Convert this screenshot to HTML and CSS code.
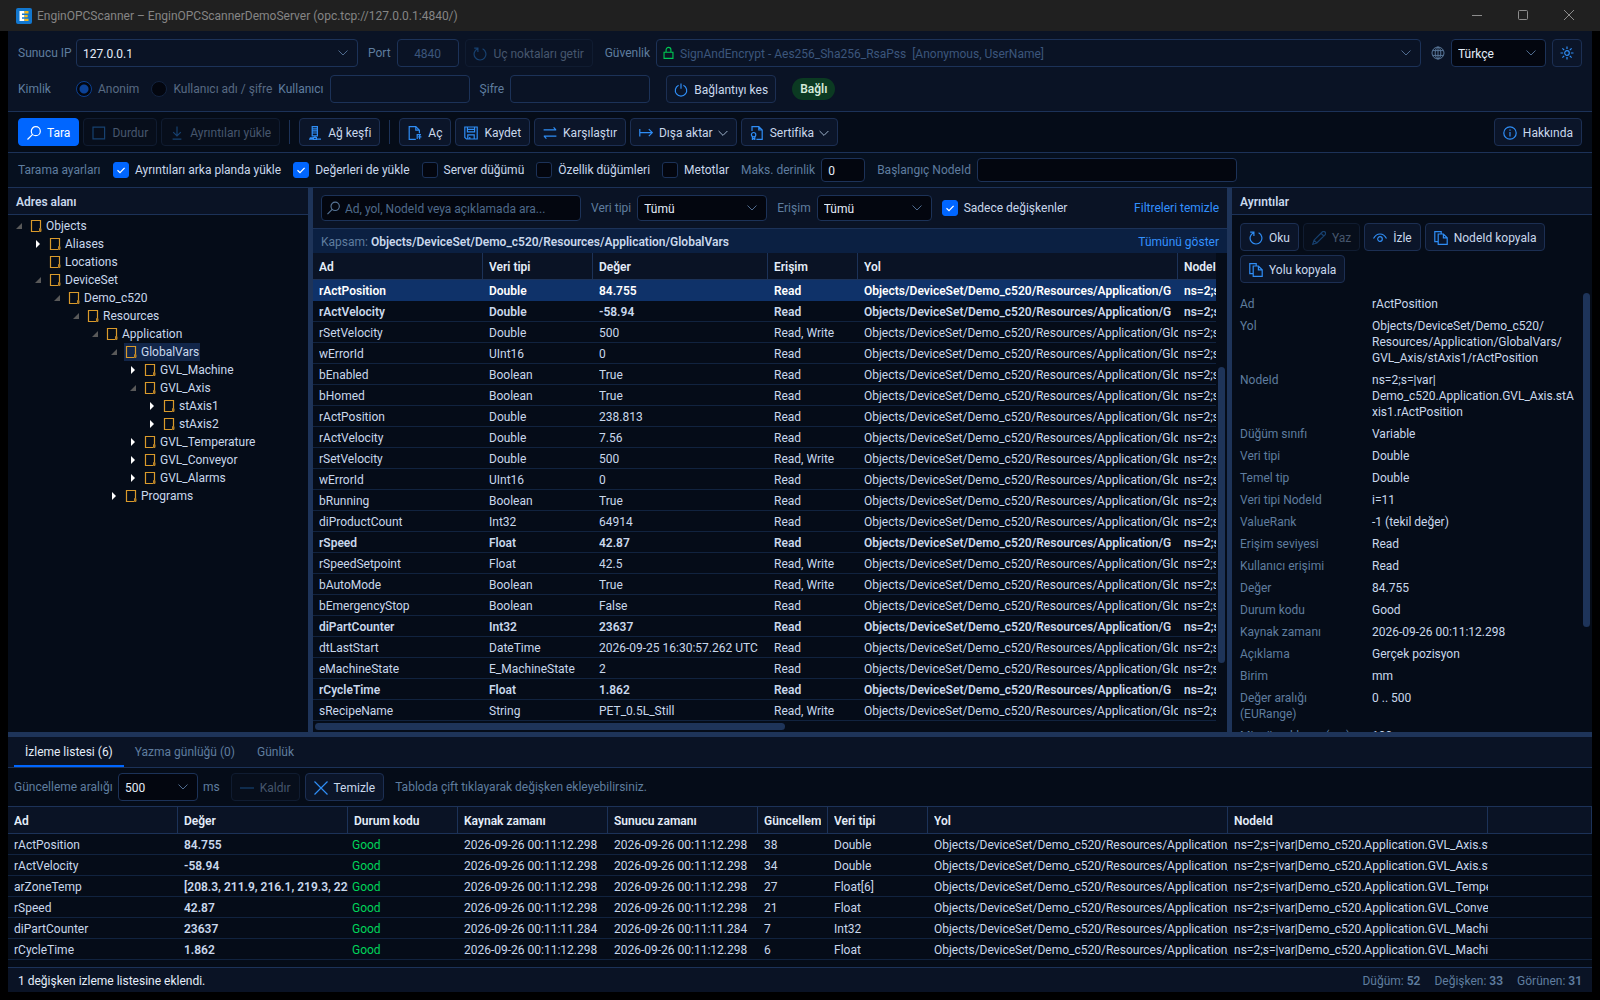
FILE: index.html
```html
<!DOCTYPE html>
<html lang="tr">
<head>
<meta charset="utf-8">
<meta name="viewport" content="width=device-width, initial-scale=1">
<title>EnginOPCScanner – EnginOPCScannerDemoServer</title>
<link rel="stylesheet" href="styles.css">
</head>
<body>
<svg class="sprite" aria-hidden="true">
  <symbol id="i-refresh" viewBox="0 0 14 14"><path d="M4.6 1.7A5.9 5.9 0 1 0 9.6 1.8M1.2 1.1h3.7v3.8"/></symbol>
  <symbol id="i-lock" viewBox="0 0 14 14"><path d="M2.2 6.2h9.6v6.6H2.2zM4.4 6V3.6a2.6 2.6 0 0 1 5.2 0V6"/></symbol>
  <symbol id="i-globe" viewBox="0 0 14 14"><circle cx="7" cy="7" r="6"/><ellipse cx="7" cy="7" rx="2.8" ry="6"/><path d="M1.6 4.6h10.8M1.6 9.4h10.8M7 1v12"/></symbol>
  <symbol id="i-sun" viewBox="0 0 14 14"><circle cx="7" cy="7" r="2.3"/><path d="M7 .5v2.6M7 10.9v2.6M.5 7h2.6M10.9 7h2.6M2.4 2.4l1.8 1.8M9.8 9.8l1.8 1.8M11.6 2.4L9.8 4.2M4.2 9.8l-1.8 1.8"/></symbol>
  <symbol id="i-power" viewBox="0 0 14 14"><path d="M4.6 2.2a5.7 5.7 0 1 0 4.8 0M7 .4v5.4"/></symbol>
  <symbol id="i-search" viewBox="0 0 14 14"><circle cx="8.8" cy="5.2" r="4.5"/><path d="M5.6 8.4L.5 13.5"/></symbol>
  <symbol id="i-stop" viewBox="0 0 14 14"><path d="M1 1.2h11.6v11.6H1z"/></symbol>
  <symbol id="i-down" viewBox="0 0 14 14"><path d="M7 .5v9M3.2 6.2L7 10l3.8-3.8M2.6 13.2h8.8"/></symbol>
  <symbol id="i-net" viewBox="0 0 14 14"><path d="M4.2.6h5.2v9.2H4.2zM4.2 2.8h5.2M4.2 4.9h5.2M4.2 7h5.2M1 13.2h4.4M8.4 13.2h4.6M5.4 11.6h3v1.9h-3zM7 9.8v1.8M1.8 11.8h3"/></symbol>
  <symbol id="i-open" viewBox="0 0 14 14"><path d="M7.8 13.4H1.2V.6h6.6l3.6 3.6v3M7.8.6v3.6h3.6M9.2 12.9V8.6h3.8M13.4 10.8h-3.2M11.6 8.8v4.4"/></symbol>
  <symbol id="i-save" viewBox="0 0 14 14"><path d="M.8 1h12.4v12H2.4L.8 11.4zM3.4 1v4.8h7.2V1M3.8 13V8.8h6.4V13M5.8 11v2M3.8 3.4h6.2"/></symbol>
  <symbol id="i-compare" viewBox="0 0 14 14"><path d="M.6 3.8h12.6M10.6 1.4L13 3.8M13.4 10.2H.8M3.4 12.6L1 10.2"/></symbol>
  <symbol id="i-export" viewBox="0 0 14 14"><path d="M.8 3v7.4M1 6.7h12M9.8 3.2l3.5 3.5-3.5 3.5"/></symbol>
  <symbol id="i-cert" viewBox="0 0 14 14"><path d="M2 5V.6h6.8l3.4 3.4v9.4H6.4M8.8.6V4h3.4M2.4 10.6v2.9l1.2-.9 1.2.9v-2.9"/><circle cx="3.6" cy="8.7" r="2.2"/></symbol>
  <symbol id="i-chev" viewBox="0 0 10 10"><path d="M.6 3L5 7.4 9.4 3"/></symbol>
  <symbol id="i-info" viewBox="0 0 14 14"><circle cx="7" cy="7" r="6.2"/><path d="M7 6v4.4M7 3.6v1.2"/></symbol>
  <symbol id="i-edit" viewBox="0 0 14 14"><path d="M.8 13.2l1.2-4L10.2 1a1.9 1.9 0 0 1 2.8 2.8L4.8 12zM9 2.2L11.8 5M2 9.2L4.8 12"/></symbol>
  <symbol id="i-eye" viewBox="0 0 14 14"><path d="M.5 7.6C2 4.6 4.4 3 7 3s5 1.600 6.500 4.600"/><circle cx="7" cy="8" r="2.300"/></symbol>
  <symbol id="i-copy" viewBox="0 0 14 14"><path d="M4 10.600H.8V.6h6.400v2M4.200 3h5.200l3.800 3.800v6.600h-9zM9.400 3v3.800h3.800"/></symbol>
  <symbol id="i-minus" viewBox="0 0 14 14"><path d="M0 7h14"/></symbol>
  <symbol id="i-x" viewBox="0 0 14 14"><path d="M.5.5l13 13M13.500.5l-13 13"/></symbol>
  <symbol id="i-folder" viewBox="0 0 12 14"><path d="M10.500 9V1.500h-9v11h7.500" fill="none" stroke="#d99a2b" stroke-width="1.200"/><path d="M9.500 9.500h1.500v3H9.500z" fill="#a87420" stroke="#b98328"/></symbol>
  <symbol id="i-closed" viewBox="0 0 6 8"><path d="M1 0l4 4-4 4z" fill="#fff"/></symbol>
  <symbol id="i-opened" viewBox="0 0 6 8"><path d="M6 1v6H0z" fill="#595959"/></symbol>
</svg>

<header class="titlebar">
  <svg class="logo" viewBox="0 0 16 16" aria-hidden="true"><rect width="16" height="16" rx="2" fill="#1277cf"/><path d="M3.500 3h5v2.400H6v1.500h2.500v2.300H6v1.500h2.500V13h-5z" fill="#fff"/><path d="M8.500 3h4v2.400h-4zM8.500 6.900h3.200v2.300H8.500zM8.500 10.700h4V13h-4z" fill="#f5b81d"/></svg>
  <h1 class="title">EnginOPCScanner – EnginOPCScannerDemoServer (opc.tcp://127.0.0.1:4840/)</h1>
  <div class="winbtns">
    <button class="winbtn" aria-label="Simge durumuna küçült"><svg viewBox="0 0 10 10"><path d="M0 5.500h10"/></svg></button>
    <button class="winbtn" aria-label="Ekranı kapla"><svg viewBox="0 0 10 10"><rect x=".5" y=".5" width="9" height="9" rx="1"/></svg></button>
    <button class="winbtn" aria-label="Kapat"><svg viewBox="0 0 10 10"><path d="M0 0l10 10M10 0L0 10"/></svg></button>
  </div>
</header>

<div class="app">
  <section class="conn">
    <div class="row">
      <label class="lead" for="ip">Sunucu IP</label>
      <select id="ip" class="ctl w-ip flat"><option>127.0.0.1</option></select>
      <label class="lbl sp-m" for="port">Port</label>
      <input id="port" class="ctl w-port flat dim" value="4840" disabled>
      <button class="btn w-endpoints" disabled><svg class="ic"><use href="#i-refresh"/></svg>Uç noktaları getir</button>
      <label class="lbl sp-l" for="sec">Güvenlik</label>
      <div class="stack grow">
        <select id="sec" class="ctl flat dim iconed" disabled><option>SignAndEncrypt - Aes256_Sha256_RsaPss&nbsp; [Anonymous, UserName]</option></select>
        <svg class="ic lock"><use href="#i-lock"/></svg>
      </div>
      <label class="lbl sp-m" for="lang"><svg class="ic globe"><use href="#i-globe"/></svg></label>
      <select id="lang" class="ctl w-lang" aria-label="Dil"><option>Türkçe</option></select>
      <button class="btn square" aria-label="Tema"><svg class="ic"><use href="#i-sun"/></svg></button>
    </div>
    <div class="row">
      <span class="lead">Kimlik</span>
      <label class="radio"><input type="radio" name="auth" checked disabled>Anonim</label>
      <label class="radio"><input type="radio" name="auth" disabled>Kullanıcı adı / şifre</label>
      <label class="lbl" for="user">Kullanıcı</label>
      <input id="user" class="ctl w-cred flat" disabled>
      <label class="lbl sp-m" for="pass">Şifre</label>
      <input id="pass" class="ctl w-cred flat" type="password" disabled>
      <button class="btn sp-xl w-disc"><svg class="ic"><use href="#i-power"/></svg>Bağlantıyı kes</button>
      <span class="badge sp-xl">Bağlı</span>
    </div>
  </section>

  <nav class="toolbar">
    <button class="btn primary"><svg class="ic"><use href="#i-search"/></svg>Tara</button>
    <button class="btn" disabled><svg class="ic"><use href="#i-stop"/></svg>Durdur</button>
    <button class="btn" disabled><svg class="ic"><use href="#i-down"/></svg>Ayrıntıları yükle</button>
    <span class="sep"></span>
    <button class="btn"><svg class="ic"><use href="#i-net"/></svg>Ağ keşfi</button>
    <span class="sep"></span>
    <button class="btn"><svg class="ic"><use href="#i-open"/></svg>Aç</button>
    <button class="btn"><svg class="ic"><use href="#i-save"/></svg>Kaydet</button>
    <button class="btn"><svg class="ic"><use href="#i-compare"/></svg>Karşılaştır</button>
    <button class="btn"><svg class="ic"><use href="#i-export"/></svg>Dışa aktar<svg class="chev"><use href="#i-chev"/></svg></button>
    <button class="btn"><svg class="ic"><use href="#i-cert"/></svg>Sertifika<svg class="chev"><use href="#i-chev"/></svg></button>
    <button class="btn push"><svg class="ic"><use href="#i-info"/></svg>Hakkında</button>
  </nav>

  <section class="options">
    <span class="lbl w-opt">Tarama ayarları</span>
    <label class="check"><input type="checkbox" checked>Ayrıntıları arka planda yükle</label>
    <label class="check"><input type="checkbox" checked>Değerleri de yükle</label>
    <label class="check"><input type="checkbox">Server düğümü</label>
    <label class="check"><input type="checkbox">Özellik düğümleri</label>
    <label class="check"><input type="checkbox">Metotlar</label>
    <div class="field"><label class="lbl" for="depth">Maks. derinlik</label><input id="depth" class="ctl low w-depth" value="0"></div>
    <div class="field"><label class="lbl" for="start">Başlangıç NodeId</label><input id="start" class="ctl low w-filter"></div>
  </section>

  <main class="main">
    <aside class="panel">
      <h2 class="panel-title">Adres alanı</h2>
      <ul class="tree" role="tree">
        <li><div class="node"><svg class="tw"><use href="#i-opened"/></svg><span class="item"><svg class="fold"><use href="#i-folder"/></svg>Objects</span></div>
          <ul>
            <li><div class="node"><svg class="tw"><use href="#i-closed"/></svg><span class="item"><svg class="fold"><use href="#i-folder"/></svg>Aliases</span></div></li>
            <li><div class="node"><svg class="tw"></svg><span class="item"><svg class="fold"><use href="#i-folder"/></svg>Locations</span></div></li>
            <li><div class="node"><svg class="tw"><use href="#i-opened"/></svg><span class="item"><svg class="fold"><use href="#i-folder"/></svg>DeviceSet</span></div>
              <ul>
                <li><div class="node"><svg class="tw"><use href="#i-opened"/></svg><span class="item"><svg class="fold"><use href="#i-folder"/></svg>Demo_c520</span></div>
                  <ul>
                    <li><div class="node"><svg class="tw"><use href="#i-opened"/></svg><span class="item"><svg class="fold"><use href="#i-folder"/></svg>Resources</span></div>
                      <ul>
                        <li><div class="node"><svg class="tw"><use href="#i-opened"/></svg><span class="item"><svg class="fold"><use href="#i-folder"/></svg>Application</span></div>
                          <ul>
                            <li><div class="node"><svg class="tw"><use href="#i-opened"/></svg><span class="item selected"><svg class="fold"><use href="#i-folder"/></svg>GlobalVars</span></div>
                              <ul>
                                <li><div class="node"><svg class="tw"><use href="#i-closed"/></svg><span class="item"><svg class="fold"><use href="#i-folder"/></svg>GVL_Machine</span></div></li>
                                <li><div class="node"><svg class="tw"><use href="#i-opened"/></svg><span class="item"><svg class="fold"><use href="#i-folder"/></svg>GVL_Axis</span></div>
                                  <ul>
                                    <li><div class="node"><svg class="tw"><use href="#i-closed"/></svg><span class="item"><svg class="fold"><use href="#i-folder"/></svg>stAxis1</span></div></li>
                                    <li><div class="node"><svg class="tw"><use href="#i-closed"/></svg><span class="item"><svg class="fold"><use href="#i-folder"/></svg>stAxis2</span></div></li>
                                  </ul>
                                </li>
                                <li><div class="node"><svg class="tw"><use href="#i-closed"/></svg><span class="item"><svg class="fold"><use href="#i-folder"/></svg>GVL_Temperature</span></div></li>
                                <li><div class="node"><svg class="tw"><use href="#i-closed"/></svg><span class="item"><svg class="fold"><use href="#i-folder"/></svg>GVL_Conveyor</span></div></li>
                                <li><div class="node"><svg class="tw"><use href="#i-closed"/></svg><span class="item"><svg class="fold"><use href="#i-folder"/></svg>GVL_Alarms</span></div></li>
                              </ul>
                            </li>
                            <li><div class="node"><svg class="tw"><use href="#i-closed"/></svg><span class="item"><svg class="fold"><use href="#i-folder"/></svg>Programs</span></div></li>
                          </ul>
                        </li>
                      </ul>
                    </li>
                  </ul>
                </li>
              </ul>
            </li>
          </ul>
        </li>
      </ul>
    </aside>
    <div class="split"></div>

    <section class="panel">
      <div class="filters">
        <div class="stack">
          <input class="ctl mid iconed w-filter" placeholder="Ad, yol, NodeId veya açıklamada ara..." aria-label="Ara">
          <svg class="ic find"><use href="#i-search"/></svg>
        </div>
        <div class="field"><label class="lbl" for="ftype">Veri tipi</label><select id="ftype" class="ctl mid w-type"><option>Tümü</option></select></div>
        <div class="field"><label class="lbl" for="facc">Erişim</label><select id="facc" class="ctl mid w-acc"><option>Tümü</option></select></div>
        <label class="check"><input type="checkbox" checked>Sadece değişkenler</label>
        <a class="link push" href="#">Filtreleri temizle</a>
      </div>
      <div class="scope"><span><span class="lbl">Kapsam:</span> <b>Objects/DeviceSet/Demo_c520/Resources/Application/GlobalVars</b></span><a class="link push" href="#">Tümünü göster</a></div>
      <div class="scroller">
        <div class="viewport">
          <table class="grid vars">
            <colgroup><col class="c-170"><col class="c-110"><col class="c-175"><col class="c-90"><col class="c-320"><col class="c-260"></colgroup>
            <thead><tr><th>Ad</th><th>Veri tipi</th><th>Değer</th><th>Erişim</th><th>Yol</th><th>NodeId</th></tr></thead>
            <tbody>
              <tr class="live current"><td>rActPosition</td><td>Double</td><td>84.755</td><td>Read</td><td>Objects/DeviceSet/Demo_c520/Resources/Application/G</td><td>ns=2;s=|var|</td></tr>
              <tr class="live"><td>rActVelocity</td><td>Double</td><td>-58.94</td><td>Read</td><td>Objects/DeviceSet/Demo_c520/Resources/Application/G</td><td>ns=2;s=|var|</td></tr>
              <tr><td>rSetVelocity</td><td>Double</td><td>500</td><td>Read, Write</td><td>Objects/DeviceSet/Demo_c520/Resources/Application/Glo</td><td>ns=2;s=|var|</td></tr>
              <tr><td>wErrorId</td><td>UInt16</td><td>0</td><td>Read</td><td>Objects/DeviceSet/Demo_c520/Resources/Application/Glo</td><td>ns=2;s=|var|</td></tr>
              <tr><td>bEnabled</td><td>Boolean</td><td>True</td><td>Read</td><td>Objects/DeviceSet/Demo_c520/Resources/Application/Glo</td><td>ns=2;s=|var|</td></tr>
              <tr><td>bHomed</td><td>Boolean</td><td>True</td><td>Read</td><td>Objects/DeviceSet/Demo_c520/Resources/Application/Glo</td><td>ns=2;s=|var|</td></tr>
              <tr><td>rActPosition</td><td>Double</td><td>238.813</td><td>Read</td><td>Objects/DeviceSet/Demo_c520/Resources/Application/Glo</td><td>ns=2;s=|var|</td></tr>
              <tr><td>rActVelocity</td><td>Double</td><td>7.56</td><td>Read</td><td>Objects/DeviceSet/Demo_c520/Resources/Application/Glo</td><td>ns=2;s=|var|</td></tr>
              <tr><td>rSetVelocity</td><td>Double</td><td>500</td><td>Read, Write</td><td>Objects/DeviceSet/Demo_c520/Resources/Application/Glo</td><td>ns=2;s=|var|</td></tr>
              <tr><td>wErrorId</td><td>UInt16</td><td>0</td><td>Read</td><td>Objects/DeviceSet/Demo_c520/Resources/Application/Glo</td><td>ns=2;s=|var|</td></tr>
              <tr><td>bRunning</td><td>Boolean</td><td>True</td><td>Read</td><td>Objects/DeviceSet/Demo_c520/Resources/Application/Glo</td><td>ns=2;s=|var|</td></tr>
              <tr><td>diProductCount</td><td>Int32</td><td>64914</td><td>Read</td><td>Objects/DeviceSet/Demo_c520/Resources/Application/Glo</td><td>ns=2;s=|var|</td></tr>
              <tr class="live"><td>rSpeed</td><td>Float</td><td>42.87</td><td>Read</td><td>Objects/DeviceSet/Demo_c520/Resources/Application/G</td><td>ns=2;s=|var|</td></tr>
              <tr><td>rSpeedSetpoint</td><td>Float</td><td>42.5</td><td>Read, Write</td><td>Objects/DeviceSet/Demo_c520/Resources/Application/Glo</td><td>ns=2;s=|var|</td></tr>
              <tr><td>bAutoMode</td><td>Boolean</td><td>True</td><td>Read, Write</td><td>Objects/DeviceSet/Demo_c520/Resources/Application/Glo</td><td>ns=2;s=|var|</td></tr>
              <tr><td>bEmergencyStop</td><td>Boolean</td><td>False</td><td>Read</td><td>Objects/DeviceSet/Demo_c520/Resources/Application/Glo</td><td>ns=2;s=|var|</td></tr>
              <tr class="live"><td>diPartCounter</td><td>Int32</td><td>23637</td><td>Read</td><td>Objects/DeviceSet/Demo_c520/Resources/Application/G</td><td>ns=2;s=|var|</td></tr>
              <tr><td>dtLastStart</td><td>DateTime</td><td>2026-09-25 16:30:57.262 UTC</td><td>Read</td><td>Objects/DeviceSet/Demo_c520/Resources/Application/Glo</td><td>ns=2;s=|var|</td></tr>
              <tr><td>eMachineState</td><td>E_MachineState</td><td>2</td><td>Read</td><td>Objects/DeviceSet/Demo_c520/Resources/Application/Glo</td><td>ns=2;s=|var|</td></tr>
              <tr class="live"><td>rCycleTime</td><td>Float</td><td>1.862</td><td>Read</td><td>Objects/DeviceSet/Demo_c520/Resources/Application/G</td><td>ns=2;s=|var|</td></tr>
              <tr><td>sRecipeName</td><td>String</td><td>PET_0.5L_Still</td><td>Read, Write</td><td>Objects/DeviceSet/Demo_c520/Resources/Application/Glo</td><td>ns=2;s=|var|</td></tr>
            </tbody>
          </table>
        </div>
        <div class="vbar"><i class="thumb vars-v"></i></div>
        <div class="hbar"><i class="thumb vars-h"></i></div>
      </div>
    </section>
    <div class="split"></div>

    <aside class="panel">
      <h2 class="panel-title">Ayrıntılar</h2>
      <div class="actions">
        <button class="btn"><svg class="ic"><use href="#i-refresh"/></svg>Oku</button>
        <button class="btn" disabled><svg class="ic"><use href="#i-edit"/></svg>Yaz</button>
        <button class="btn"><svg class="ic"><use href="#i-eye"/></svg>İzle</button>
        <button class="btn"><svg class="ic"><use href="#i-copy"/></svg>NodeId kopyala</button>
        <button class="btn"><svg class="ic"><use href="#i-copy"/></svg>Yolu kopyala</button>
      </div>
      <div class="details">
        <dl class="props">
          <dt>Ad</dt><dd>rActPosition</dd>
          <dt>Yol</dt><dd>Objects/DeviceSet/Demo_c520/<wbr>Resources/Application/GlobalVars/<wbr>GVL_Axis/stAxis1/rActPosition</dd>
          <dt>NodeId</dt><dd>ns=2;s=|var|<wbr>Demo_c520.Application.GVL_Axis.stA<wbr>xis1.rActPosition</dd>
          <dt>Düğüm sınıfı</dt><dd>Variable</dd>
          <dt>Veri tipi</dt><dd>Double</dd>
          <dt>Temel tip</dt><dd>Double</dd>
          <dt>Veri tipi NodeId</dt><dd>i=11</dd>
          <dt>ValueRank</dt><dd>-1 (tekil değer)</dd>
          <dt>Erişim seviyesi</dt><dd>Read</dd>
          <dt>Kullanıcı erişimi</dt><dd>Read</dd>
          <dt>Değer</dt><dd>84.755</dd>
          <dt>Durum kodu</dt><dd>Good</dd>
          <dt>Kaynak zamanı</dt><dd>2026-09-26 00:11:12.298</dd>
          <dt>Açıklama</dt><dd>Gerçek pozisyon</dd>
          <dt>Birim</dt><dd>mm</dd>
          <dt>Değer aralığı (EURange)</dt><dd>0 .. 500</dd>
          <dt>Min. örnekleme (ms)</dt><dd>100</dd>
        </dl>
        <div class="vbar"><i class="thumb details-v"></i></div>
      </div>
    </aside>
  </main>

  <section class="bottom">
    <div class="tabs" role="tablist">
      <button class="tab active" role="tab" aria-selected="true">İzleme listesi (6)</button>
      <button class="tab" role="tab">Yazma günlüğü (0)</button>
      <button class="tab" role="tab">Günlük</button>
    </div>
    <div class="watchbar">
      <label class="lbl w-upd" for="interval">Güncelleme aralığı</label>
      <select id="interval" class="ctl w-int"><option>500</option></select>
      <span class="lbl">ms</span>
      <button class="btn sp-l" disabled><svg class="ic"><use href="#i-minus"/></svg>Kaldır</button>
      <button class="btn"><svg class="ic"><use href="#i-x"/></svg>Temizle</button>
      <span class="lbl sp-l">Tabloda çift tıklayarak değişken ekleyebilirsiniz.</span>
    </div>
    <table class="grid watch">
      <colgroup><col class="c-170"><col class="c-170"><col class="c-110"><col class="c-150"><col class="c-150"><col class="c-70"><col class="c-100"><col class="c-300"><col class="c-260"><col></colgroup>
      <thead><tr><th>Ad</th><th>Değer</th><th>Durum kodu</th><th>Kaynak zamanı</th><th>Sunucu zamanı</th><th>Güncellem</th><th>Veri tipi</th><th>Yol</th><th>NodeId</th><th></th></tr></thead>
      <tbody>
        <tr><td>rActPosition</td><td class="val">84.755</td><td class="good">Good</td><td>2026-09-26 00:11:12.298</td><td>2026-09-26 00:11:12.298</td><td>38</td><td>Double</td><td>Objects/DeviceSet/Demo_c520/Resources/Application/</td><td>ns=2;s=|var|Demo_c520.Application.GVL_Axis.st</td><td></td></tr>
        <tr><td>rActVelocity</td><td class="val">-58.94</td><td class="good">Good</td><td>2026-09-26 00:11:12.298</td><td>2026-09-26 00:11:12.298</td><td>34</td><td>Double</td><td>Objects/DeviceSet/Demo_c520/Resources/Application/</td><td>ns=2;s=|var|Demo_c520.Application.GVL_Axis.st</td><td></td></tr>
        <tr><td>arZoneTemp</td><td class="val">[208.3, 211.9, 216.1, 219.3, 220</td><td class="good">Good</td><td>2026-09-26 00:11:12.298</td><td>2026-09-26 00:11:12.298</td><td>27</td><td>Float[6]</td><td>Objects/DeviceSet/Demo_c520/Resources/Application/</td><td>ns=2;s=|var|Demo_c520.Application.GVL_Tempe</td><td></td></tr>
        <tr><td>rSpeed</td><td class="val">42.87</td><td class="good">Good</td><td>2026-09-26 00:11:12.298</td><td>2026-09-26 00:11:12.298</td><td>21</td><td>Float</td><td>Objects/DeviceSet/Demo_c520/Resources/Application/</td><td>ns=2;s=|var|Demo_c520.Application.GVL_Conve</td><td></td></tr>
        <tr><td>diPartCounter</td><td class="val">23637</td><td class="good">Good</td><td>2026-09-26 00:11:11.284</td><td>2026-09-26 00:11:11.284</td><td>7</td><td>Int32</td><td>Objects/DeviceSet/Demo_c520/Resources/Application/</td><td>ns=2;s=|var|Demo_c520.Application.GVL_Machi</td><td></td></tr>
        <tr><td>rCycleTime</td><td class="val">1.862</td><td class="good">Good</td><td>2026-09-26 00:11:12.298</td><td>2026-09-26 00:11:12.298</td><td>6</td><td>Float</td><td>Objects/DeviceSet/Demo_c520/Resources/Application/</td><td>ns=2;s=|var|Demo_c520.Application.GVL_Machi</td><td></td></tr>
      </tbody>
    </table>
  </section>

  <footer class="status">
    <span class="msg">1 değişken izleme listesine eklendi.</span>
    <span class="lbl push">Düğüm: <b>52</b></span>
    <span class="lbl">Değişken: <b>33</b></span>
    <span class="lbl">Görünen: <b>31</b></span>
  </footer>
</div>
</body>
</html>
```
FILE: styles.css
```css
:root {
  --bg: #050c18;
  --bar: #0a1325;
  --options: #06101f;
  --field: #03060f;
  --line: #1c3258;
  --line-soft: #11233f;
  --split: #1e3459;
  --text: #c9d8ec;
  --strong: #e4edf9;
  --muted: #5f7d9f;
  --off: #46566d;
  --accent: #0066ff;
  --icon: #2f8df5;
}

* { box-sizing: border-box; }

body {
  margin: 0;
  height: 100vh;
  display: flex;
  flex-direction: column;
  background: #000;
  color: var(--text);
  font: 12px/16px Roboto, "Open Sans", sans-serif;
  overflow: hidden;
}

.sprite { display: none; }
button, input, select { font: inherit; color: inherit; }
svg { flex: none; }
b { font-weight: 600; }

/* Title bar */
.titlebar {
  display: flex;
  align-items: center;
  height: 31px;
  padding-left: 16px;
  background: #202020;
  color: #858585;
}
.logo { width: 16px; height: 16px; }
.title { margin: 0 0 0 5px; font-size: 12px; font-weight: 400; }
.winbtns { display: flex; margin-left: auto; margin-right: 8px; }
.winbtn { width: 46px; height: 31px; padding: 0; border: 0; background: none; }
.winbtn svg { width: 10px; height: 10px; fill: none; stroke: #8c8c8c; }

.app {
  flex: 1;
  min-height: 0;
  display: flex;
  flex-direction: column;
  margin: 0 8px 8px;
  background: var(--bg);
}

/* Shared controls */
.ctl {
  height: 28px;
  min-width: 0;
  padding: 1px 6px 0;
  border: 1px solid var(--line);
  border-radius: 4px;
  background-color: var(--field);
  color: var(--strong);
  outline: 0;
}
.ctl.mid { height: 26px; }
.ctl.low { height: 24px; }
.ctl.flat { background-color: transparent; }
.ctl.dim { color: #3c567c; opacity: 1; }
.ctl::placeholder { color: #4f6a8b; opacity: 1; }
select.ctl {
  appearance: none;
  background-image: url("data:image/svg+xml,%3Csvg xmlns='http://www.w3.org/2000/svg' width='10' height='6'%3E%3Cpath d='M.5.5L5 5 9.5.5' fill='none' stroke='%234f6b8f'/%3E%3C/svg%3E");
  background-repeat: no-repeat;
  background-position: right 9px center;
}
.btn {
  display: inline-flex;
  align-items: center;
  justify-content: center;
  gap: 6px;
  height: 28px;
  padding: 1px 8px 0;
  border: 1px solid #1c2f53;
  border-radius: 4px;
  background: #0b1529;
  color: var(--text);
  white-space: nowrap;
}
.btn:disabled { border-color: #101c31; background: #070e1b; color: var(--off); }
.btn:disabled .ic { stroke: #174170; }
.btn.primary { border-color: var(--accent); background: var(--accent); color: #fff; }
.btn.primary .ic { stroke: #fff; }
.btn.square { width: 30px; padding: 0; }
.ic { width: 14px; height: 14px; fill: none; stroke: var(--icon); stroke-width: 1.2; }
.chev { width: 10px; height: 10px; fill: none; stroke: #9fb3cc; margin-left: -1px; }
.lbl, .lead { color: var(--muted); white-space: nowrap; }
.lead { width: 52px; }
.field { display: flex; align-items: center; gap: 6px; }
.push { margin-left: auto; }
.grow { flex: 1; min-width: 0; }
.sp-m { margin-left: 4px; }
.sp-l { margin-left: 6px; }
.sp-xl { margin-left: 10px; }

/* Icon laid over the left end of a field */
.stack { display: grid; align-items: center; }
.stack > * { grid-area: 1 / 1; }
.stack .ic { pointer-events: none; }
.iconed { padding-left: 23px; }
.lock { stroke: #00c853; margin-left: 6px; width: 13px; }
.find { stroke: #587698; margin-left: 6px; width: 13px; }

.check, .radio { display: flex; align-items: center; gap: 6px; white-space: nowrap; }
.check input, .radio input {
  appearance: none;
  width: 16px;
  height: 16px;
  margin: 0;
  border: 1px solid var(--line);
  border-radius: 3px;
  background: var(--field);
}
.check input:checked {
  border-color: var(--accent);
  background: var(--accent) url("data:image/svg+xml,%3Csvg xmlns='http://www.w3.org/2000/svg' width='14' height='14'%3E%3Cpath d='M3.500 7.200L6 9.600l4.600-4.800' fill='none' stroke='%23fff' stroke-width='1.200'/%3E%3C/svg%3E") center no-repeat;
}
.radio { color: #586a83; }
.radio + .radio { margin-left: 6px; }
.radio input { border-radius: 50%; border-color: #13233f; }
.radio input:checked { border-color: #0b3f8f; background: radial-gradient(circle, #0b4196 4px, var(--field) 5px); }
.link { color: #3391ff; text-decoration: none; }

/* Connection */
.conn { display: grid; gap: 8px; padding: 8px 10px; background: var(--bar); border-bottom: 1px solid var(--line); }
.row { display: flex; align-items: center; gap: 6px; }
.conn .btn:disabled { background: transparent; }
.w-ip { width: 282px; }
.w-port { width: 62px; text-align: center; }
.w-endpoints { width: 128px; }
.w-lang { width: 95px; }
.w-cred { width: 140px; }
.w-disc { width: 110px; }
.globe { stroke: #587698; stroke-width: 1; display: block; }
.badge { padding: 3px 8px; border-radius: 11px; background: #0b3a22; color: #d3ead9; font-weight: 600; }

.toolbar { display: flex; align-items: center; gap: 4px; padding: 6px 10px; border-bottom: 1px solid var(--line); }
.sep { width: 1px; height: 24px; margin: 0 5px; background: var(--line); }

.options { display: flex; align-items: center; gap: 12px; padding: 5px 10px; background: var(--options); border-bottom: 1px solid var(--line); }
.w-opt { width: 83px; }
.w-depth { width: 44px; }
.w-filter { width: 260px; }

/* Main area */
.main { flex: 1; min-height: 0; display: grid; grid-template: minmax(0, 1fr) / 300px 5px minmax(0, 1fr) 5px 360px; }
.split { background: var(--split); }
.panel { display: flex; flex-direction: column; min-width: 0; min-height: 0; overflow: hidden; }
.panel-title {
  margin: 0;
  padding: 6px 8px 4px;
  background: var(--bar);
  border-bottom: 1px solid var(--line);
  font-size: 12px;
  font-weight: 600;
}

.tree, .tree ul { list-style: none; margin: 0; padding: 0; }
.tree { padding: 2px 8px; }
.tree ul { padding-left: 19px; }
.node { display: flex; align-items: center; height: 18px; }
.tw { width: 6px; height: 8px; margin-right: 7px; }
.item { display: flex; align-items: center; gap: 4px; height: 18px; padding: 0 1px; }
.item.selected { background: #12264a; }
.fold { width: 12px; height: 14px; }

.filters { display: flex; align-items: center; gap: 10px; padding: 7px 8px; background: var(--bar); border-bottom: 1px solid var(--line); }
.w-type { width: 130px; }
.w-acc { width: 115px; }
.scope { display: flex; align-items: center; padding: 5px 8px 3px; background: #0b2042; }
.scroller { flex: 1; min-height: 0; display: grid; grid-template: minmax(0, 1fr) 11px / minmax(0, 1fr) 11px; }
.viewport { overflow: hidden; }
.vbar, .hbar { padding: 2px; }
.thumb { display: block; border-radius: 4px; background: var(--split); }
.vbar .thumb { width: 7px; }
.hbar .thumb { height: 7px; }
.vars-v { margin-top: 112px; height: 296px; }
.vars-h { width: 470px; }

/* Data grids: long text is clipped at the cell's content edge */
.grid { table-layout: fixed; border-collapse: separate; border-spacing: 0; }
.grid th, .grid td { overflow: clip; overflow-clip-margin: content-box; white-space: nowrap; text-align: left; }
.grid th { padding: 2px 6px 0; line-height: 24px; background: var(--bar); border-bottom: 1px solid var(--line); border-right: 1px solid var(--line); color: var(--strong); font-weight: 600; }
.grid td { padding: 2px 0 0 6px; line-height: 18px; border-bottom: 1px solid var(--line-soft); }
.live td, td.val { font-weight: 600; }
.current td { background: #0f3269; border-color: #0f3269; color: #fff; }
.grid td.good { padding-left: 4px; color: #00d45a; }
.vars { width: 1125px; }
.watch { width: 100%; border-top: 1px solid var(--line); }
.c-70 { width: 70px; }
.c-90 { width: 90px; }
.c-100 { width: 100px; }
.c-110 { width: 110px; }
.c-150 { width: 150px; }
.c-170 { width: 170px; }
.c-175 { width: 175px; }
.c-260 { width: 260px; }
.c-300 { width: 300px; }
.c-320 { width: 320px; }

/* Details */
.actions { display: flex; flex-wrap: wrap; gap: 4px; padding: 8px 8px 6px; }
.details { flex: 1; min-height: 0; display: grid; grid-template-columns: minmax(0, 1fr) 11px; padding-top: 2px; overflow: hidden; }
.props { display: grid; grid-template-columns: 132px minmax(0, 1fr); margin: 0; padding: 2px 8px 0; align-content: start; }
.props dt, .props dd { margin: 0; padding: 3px 0; }
.props dt { padding-right: 12px; color: var(--muted); }
.details-v { height: 334px; }

/* Bottom */
.bottom { border-top: 5px solid var(--split); padding-bottom: 7px; }
.tabs { display: flex; padding-left: 6px; background: var(--bar); border-bottom: 1px solid var(--line); }
.tab { height: 30px; padding: 2px 11px 0; border: 0; border-bottom: 2px solid transparent; background: none; color: var(--muted); }
.tab.active { border-color: var(--accent); color: var(--strong); }
.watchbar { display: flex; align-items: center; gap: 5px; padding: 5px 6px; }
.w-upd { width: 99px; }
.w-int { width: 80px; }

.status { display: flex; align-items: center; gap: 14px; padding: 5px 10px 3px; background: var(--bar); border-top: 1px solid var(--line); }
.msg { color: var(--strong); }
```
